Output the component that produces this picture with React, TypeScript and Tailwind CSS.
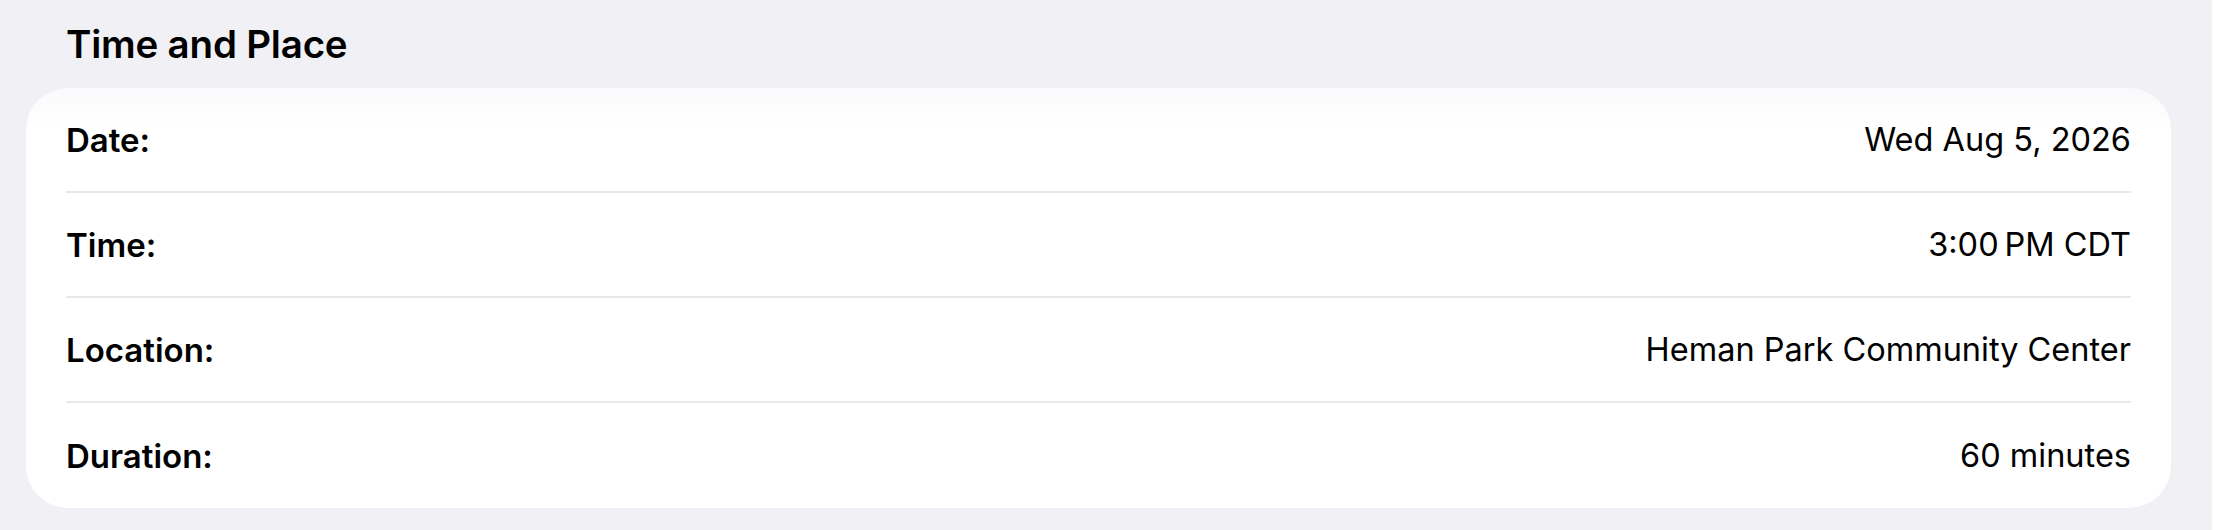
import React from "react";

const rows = [
  { label: "Date:", value: "Wed Aug 5, 2026" },
  { label: "Time:", value: "3:00\u202FPM CDT" },
  { label: "Location:", value: "Heman Park Community Center" },
  { label: "Duration:", value: "60 minutes" },
];

export default function App() {
  return (
    <div
      className="flex h-[530px] w-full bg-[#f0f0f5] text-black"
      style={{ fontFamily: "Inter, 'Noto Sans', sans-serif" }}
    >
      <div className="flex flex-1 flex-col">
        <div className="flex h-[88px] items-center pl-[66px]">
          <h2 className="text-[38.5px] font-semibold leading-none tracking-[-0.2px]">Time and Place</h2>
        </div>
        <div className="ml-[26px] mr-[41px] rounded-[42px] bg-gradient-to-b from-[#fafafc] to-white to-[40px] px-[40px]">
          {rows.map((r, i) => (
            <div
              key={r.label}
              className={
                "flex h-[105px] items-center justify-between pt-[1px] " +
                (i < rows.length - 1 ? "border-b-2 border-[#e8e8ec]" : "")
              }
            >
              <span className="text-[33px] font-semibold leading-none">{r.label}</span>
              <span className="text-[32.5px] font-normal leading-none">{r.value}</span>
            </div>
          ))}
        </div>
      </div>
      <div className="w-[4px] bg-white" />
    </div>
  );
}
